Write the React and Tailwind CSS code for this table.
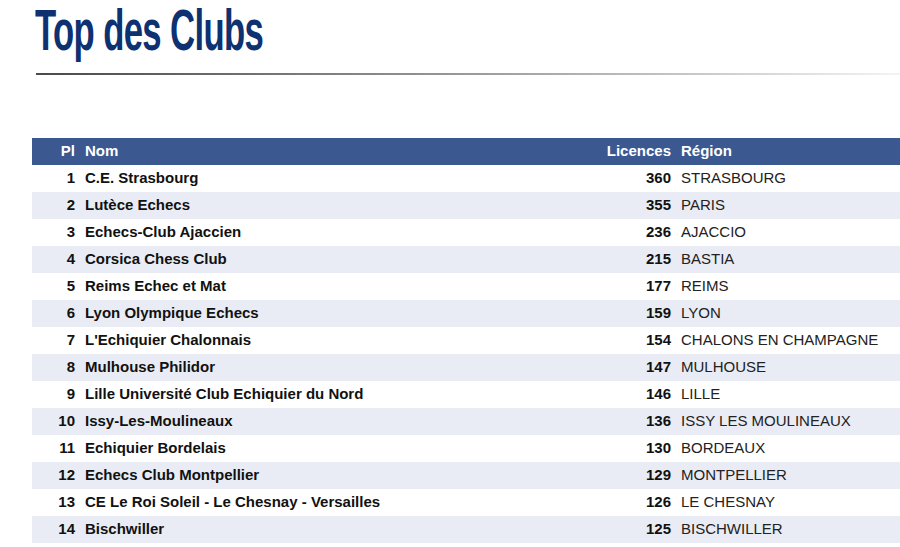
import React from "react";

const clubs = [
  { pl: 1, nom: "C.E. Strasbourg", licences: 360, region: "STRASBOURG" },
  { pl: 2, nom: "Lutèce Echecs", licences: 355, region: "PARIS" },
  { pl: 3, nom: "Echecs-Club Ajaccien", licences: 236, region: "AJACCIO" },
  { pl: 4, nom: "Corsica Chess Club", licences: 215, region: "BASTIA" },
  { pl: 5, nom: "Reims Echec et Mat", licences: 177, region: "REIMS" },
  { pl: 6, nom: "Lyon Olympique Echecs", licences: 159, region: "LYON" },
  { pl: 7, nom: "L'Echiquier Chalonnais", licences: 154, region: "CHALONS EN CHAMPAGNE" },
  { pl: 8, nom: "Mulhouse Philidor", licences: 147, region: "MULHOUSE" },
  { pl: 9, nom: "Lille Université Club Echiquier du Nord", licences: 146, region: "LILLE" },
  { pl: 10, nom: "Issy-Les-Moulineaux", licences: 136, region: "ISSY LES MOULINEAUX" },
  { pl: 11, nom: "Echiquier Bordelais", licences: 130, region: "BORDEAUX" },
  { pl: 12, nom: "Echecs Club Montpellier", licences: 129, region: "MONTPELLIER" },
  { pl: 13, nom: "CE Le Roi Soleil - Le Chesnay - Versailles", licences: 126, region: "LE CHESNAY" },
  { pl: 14, nom: "Bischwiller", licences: 125, region: "BISCHWILLER" },
];

const TopClubs = () => {
  return (
    <div className="bg-white w-[900px] h-[547px] overflow-hidden font-['Liberation_Sans',Arial,sans-serif]">
      <div className="pl-[35px] h-[60px]">
        <h1 className="inline-block origin-left scale-x-[0.608] text-[57px] leading-[60px] font-bold tracking-[-1px] text-[#0d3171] whitespace-nowrap">
          Top des Clubs
        </h1>
      </div>
      <div className="ml-[36px] mt-[13px] h-[2px] bg-gradient-to-r from-[#4a4a4a] via-[#9a9a9a] to-[#f4f4f4]" />

      <table className="ml-[32px] mt-[63px] w-[868px] table-fixed border-collapse text-[15px] text-[#111]">
        <colgroup>
          <col className="w-[48px]" />
          <col />
          <col className="w-[76px]" />
          <col className="w-[224px]" />
        </colgroup>
        <thead>
          <tr className="h-[27px] bg-[#3b5890] text-white font-bold">
            <th className="pr-[5px] text-right font-bold">Pl</th>
            <th className="pl-[5px] text-left font-bold">Nom</th>
            <th className="pr-[5px] text-right font-bold">Licences</th>
            <th className="pl-[5px] text-left font-bold">Région</th>
          </tr>
        </thead>
        <tbody>
          {clubs.map((c, i) => (
            <tr
              key={c.pl}
              className={`h-[27px] ${i % 2 === 1 ? "bg-[#e9ecf4]" : "bg-white"}`}
            >
              <td className="pr-[5px] text-right font-bold">{c.pl}</td>
              <td className="pl-[5px] font-bold whitespace-nowrap">{c.nom}</td>
              <td className="pr-[5px] text-right font-bold">{c.licences}</td>
              <td className="pl-[5px] whitespace-nowrap text-[#222]">{c.region}</td>
            </tr>
          ))}
        </tbody>
      </table>
    </div>
  );
};

export default TopClubs;
